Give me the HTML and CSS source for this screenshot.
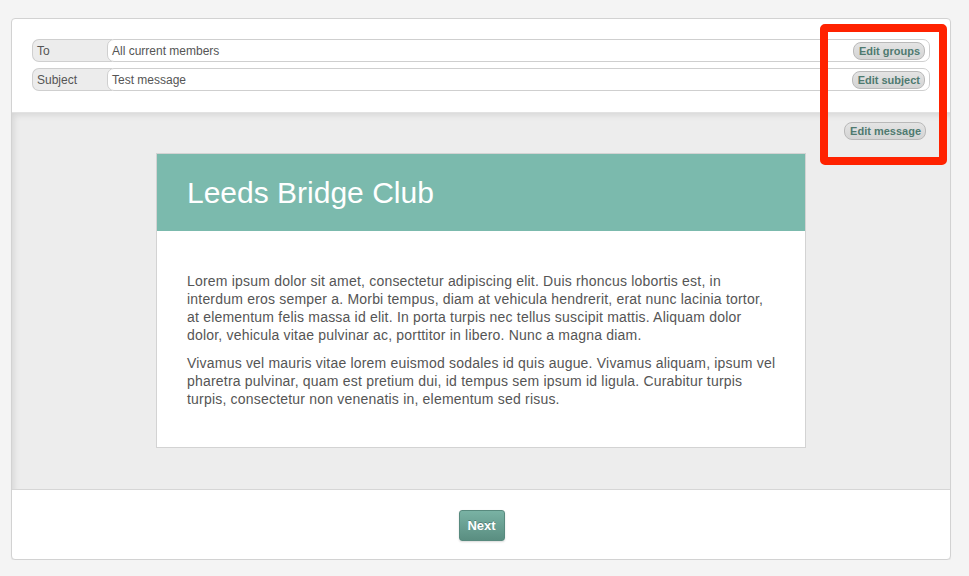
FILE: index.html
```html
<!DOCTYPE html>
<html>
<head>
<meta charset="utf-8">
<link rel="stylesheet" href="styles.css">
</head>
<body>
<div class="card">
  <div class="fields">
    <div class="row">
      <div class="label">To</div>
      <div class="value"><span class="value-text">All current members</span><button class="edit">Edit groups</button></div>
    </div>
    <div class="row">
      <div class="label">Subject</div>
      <div class="value"><span class="value-text">Test message</span><button class="edit">Edit subject</button></div>
    </div>
  </div>
  <div class="preview">
    <div class="preview-tools"><button class="edit">Edit message</button></div>
    <div class="email">
      <div class="email-head">Leeds Bridge Club</div>
      <div class="email-body">
        <p>Lorem ipsum dolor sit amet, consectetur adipiscing elit. Duis rhoncus lobortis est, in interdum eros semper a. Morbi tempus, diam at vehicula hendrerit, erat nunc lacinia tortor, at elementum felis massa id elit. In porta turpis nec tellus suscipit mattis. Aliquam dolor dolor, vehicula vitae pulvinar ac, porttitor in libero. Nunc a magna diam.</p>
        <p>Vivamus vel mauris vitae lorem euismod sodales id quis augue. Vivamus aliquam, ipsum vel pharetra pulvinar, quam est pretium dui, id tempus sem ipsum id ligula. Curabitur turpis turpis, consectetur non venenatis in, elementum sed risus.</p>
      </div>
    </div>
  </div>
  <div class="actions"><button class="next">Next</button></div>
</div>
<div class="highlight"></div>
</body>
</html>
```
FILE: styles.css
```css
html, body {
  margin: 0;
  padding: 0;
  background: #f4f4f4;
  font-family: "Liberation Sans", Arial, Helvetica, sans-serif;
}
body {
  padding: 18px 0 0 11px;
}
.card {
  width: 940px;
  box-sizing: border-box;
  background: #fff;
  border: 1px solid #d2d2d2;
  border-radius: 4px;
  box-shadow: 0 1px 1px rgba(0,0,0,0.06);
  overflow: hidden;
}
.fields {
  padding: 20px 20px 21px 20px;
  display: flex;
  flex-direction: column;
  gap: 6px;
}
.row {
  display: flex;
  height: 23px;
  font-size: 12px;
  color: #555;
}
.label {
  width: 80px;
  box-sizing: border-box;
  background: #ececec;
  border: 1px solid #cfcfcf;
  border-right: none;
  border-radius: 7px 0 0 7px;
  padding: 4px 0 0 4px;
  margin-right: -5px;
}
.value {
  flex: 1;
  display: flex;
  align-items: flex-end;
  box-sizing: border-box;
  background: #fff;
  border: 1px solid #cfcfcf;
  border-radius: 7px;
  padding: 0 4px 1px 4px;
}
.value-text {
  flex: 1;
  align-self: flex-start;
  padding-top: 4px;
}
.edit {
  font-family: "Liberation Sans", Arial, Helvetica, sans-serif;
  font-size: 11px;
  font-weight: bold;
  line-height: 13px;
  color: #4f7a70;
  background: linear-gradient(#e4e4e4, #d4d4d4);
  border: 1px solid #b9b9b9;
  border-radius: 8px;
  padding: 2px 4px 1px 5px;
  margin: 0;
}
.preview {
  background: #ededed;
  border-top: 1px solid #e2e2e2;
  border-bottom: 1px solid #d6d6d6;
  box-shadow: inset 4px 4px 6px -2px rgba(0,0,0,0.10);
  padding: 9px 24px 41px 24px;
}
.preview-tools {
  display: flex;
  justify-content: flex-end;
  margin-bottom: 13px;
}
.email {
  width: 650px;
  box-sizing: border-box;
  margin: 0 auto;
  background: #fff;
  border: 1px solid #d3d3d3;
}
.email-head {
  background: #7bbaad;
  color: #fff;
  font-size: 30px;
  line-height: 36px;
  height: 77px;
  box-sizing: border-box;
  padding: 21px 30px 0 30px;
}
.email-body {
  padding: 41px 27px 39px 30px;
  font-size: 14px;
  line-height: 18px;
  letter-spacing: 0.2px;
  color: #555;
}
.email-body p {
  margin: 0 0 10px 0;
}
.email-body p:last-child {
  margin-bottom: 0;
}
.actions {
  display: flex;
  justify-content: center;
  padding: 20px 0 18px 1px;
}
.next {
  font-family: "Liberation Sans", Arial, Helvetica, sans-serif;
  font-size: 13px;
  font-weight: bold;
  color: #fff;
  text-shadow: 0 -1px 0 rgba(0,0,0,0.25);
  width: 46px;
  height: 31px;
  padding: 0;
  background: linear-gradient(#79b2a4, #5a8e81);
  border: 1px solid #588a7e;
  border-radius: 3px;
  box-shadow: 0 1px 2px rgba(0,0,0,0.15);
}
.highlight {
  position: absolute;
  left: 820px;
  top: 24px;
  width: 127px;
  height: 141px;
  box-sizing: border-box;
  border: 8px solid #ff2200;
  border-radius: 5px;
}
```
